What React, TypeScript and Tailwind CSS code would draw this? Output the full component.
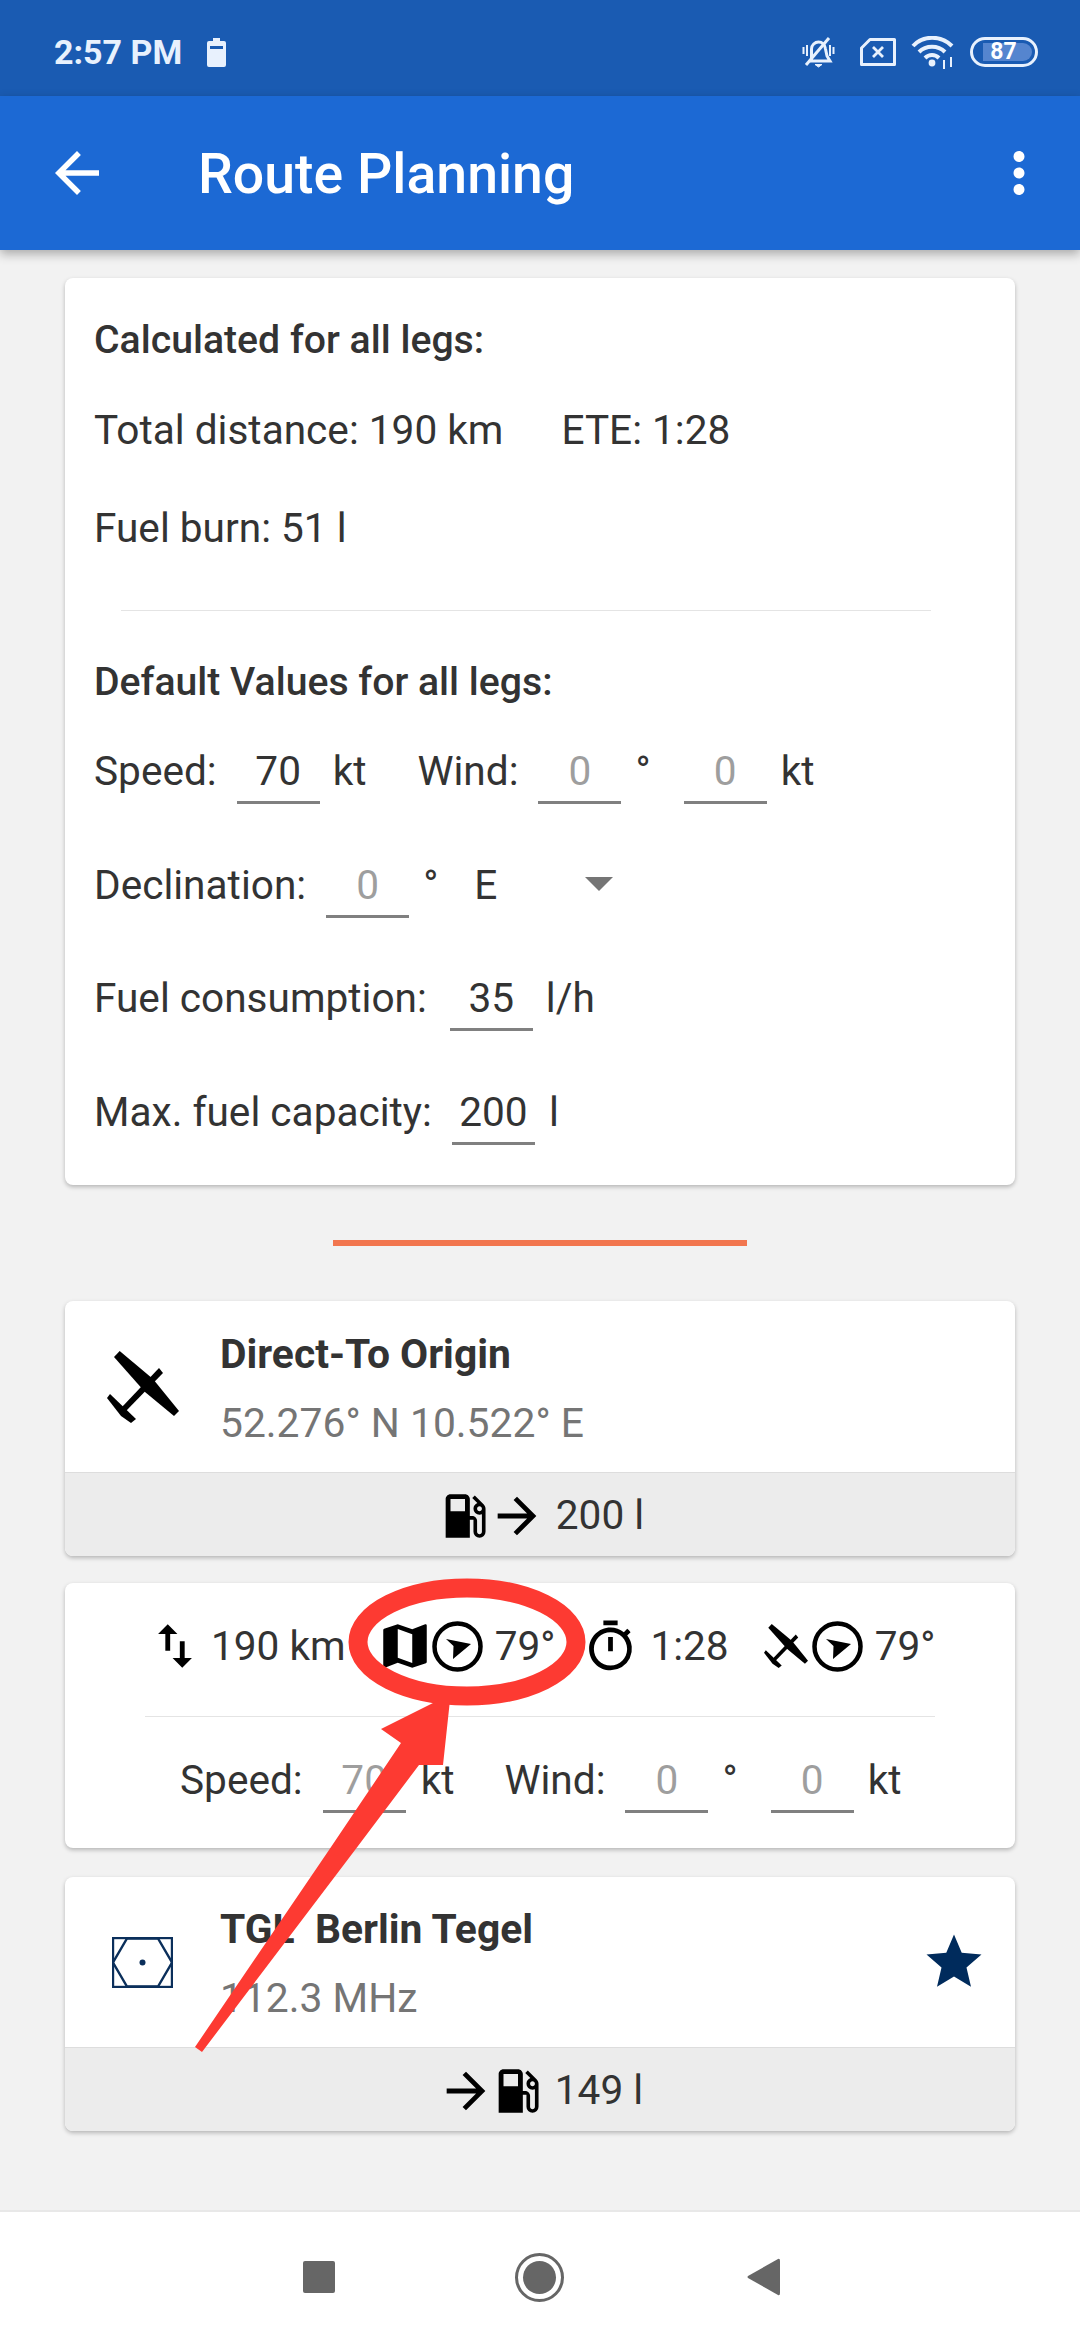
import { MdArrowBack, MdArrowForward, MdLocalGasStation, MdMap, MdMoreVert, MdOutlineTimer, MdStar, MdSwapVert } from 'react-icons/md'

function Field({ value, muted, className }: { value: string; muted?: boolean; className?: string }) {
  return (
    <div className={`w-[83px] h-[64px] border-b-[3px] border-[#808080] text-center leading-[63px] ${muted ? 'text-[#9e9e9e]' : ''} ${className ?? ''}`}>
      {value}
    </div>
  )
}

function Plane({ size }: { size: number }) {
  return (
    <svg width={size} height={size} viewBox="0 0 72 72" className="shrink-0">
      <path d="M12.7 0 L46 28 L72 60 L67 65 L38 41 L7 6 Z" fill="#000" />
      <path d="M52 17 L56 22 L19 60 L15 56 Z" fill="#000" />
      <path d="M3 43 L29 68 L24 72 L14 65 L0 47 Z" fill="#000" />
    </svg>
  )
}

function Compass() {
  return (
    <svg width="51" height="51" viewBox="0 0 51 51" className="shrink-0">
      <circle cx="25.5" cy="25.5" r="23" fill="none" stroke="#000" strokeWidth="4.5" />
      <path d="M39 23 L14 18 L21.5 25 L21 38 Z" fill="#000" />
    </svg>
  )
}

function Footer({ children }: { children: React.ReactNode }) {
  return (
    <div className="h-[84px] bg-[#ececec] border-t border-[#dddddd] rounded-b-[8px] flex items-center justify-center pt-[2px]">
      {children}
    </div>
  )
}

function StatusIcons() {
  return (
    <div className="flex items-center text-[#e8f1fd]">
      {/* muted bell */}
      <svg width="33" height="32" viewBox="0 0 33 32" fill="none" stroke="currentColor" strokeWidth="3">
        <path d="M9.5 24 V13 C9.5 9 13 6 16.5 6 C20 6 23 8.5 23.5 13 L25 20 L28 25 H8" />
        <path d="M4 29 L27 2" />
        <path d="M1.5 11 V18 M5 9 V20 M28 9 V20 M31.5 11 V18" strokeWidth="2" />
        <path d="M13 28.5 H20 L16.5 31 Z" fill="currentColor" strokeWidth="1" />
      </svg>
      <svg width="36" height="28" viewBox="0 0 36 28" fill="none" stroke="currentColor" strokeWidth="3" className="ml-[25px]">
        <path d="M10 1.5 H34.5 V26.5 H1.5 V10 Z" strokeLinejoin="round" />
        <path d="M13 9 L23 19 M23 9 L13 19" strokeWidth="2.8" />
      </svg>
      <svg width="44" height="33" viewBox="0 0 44 33" fill="none" stroke="currentColor" strokeWidth="4" className="ml-[15px]">
        <path d="M2 10 C12 -1 30 -1 41 10" />
        <path d="M8 16 C15 9 27 9 34 16" />
        <path d="M14 22 C18 18 24 18 28 22" />
        <circle cx="21" cy="27" r="3.4" fill="currentColor" stroke="none" />
        <path d="M33 24 V33 M40 21 V31" strokeWidth="2" />
      </svg>
      <div className="ml-[15px] w-[68px] h-[30px] rounded-full border-[3px] border-[#e8f1fd] flex items-center pl-[10px] pr-[3px]">
        <div className="w-full h-[18px] rounded-r-full bg-[#5585cf] text-[23px] leading-[18px] font-bold text-center pr-[8px] text-white">87</div>
      </div>
    </div>
  )
}

export default function App() {
  return (
    <div className="relative w-[1080px] h-[2340px] overflow-hidden flex flex-col bg-[#f2f2f2] text-[#333333] text-[40.6px] font-['Roboto',sans-serif]">
      {/* Status bar */}
      <div className="h-[96px] shrink-0 bg-[#1a5bb2] flex items-center pl-[54px] pr-[42px] pt-[8px] text-[#e8f1fd]">
        <span className="text-[34px] font-bold">2:57 PM</span>
        <svg width="19" height="29" viewBox="0 0 19 29" className="ml-[25px]">
          <path d="M6 0 H13 V3 H17 Q19 3 19 5 V27 Q19 29 17 29 H2 Q0 29 0 27 V5 Q0 3 2 3 H6 Z M3 8 V11 H16 V8 Z" fill="currentColor" fillRule="evenodd" />
        </svg>
        <div className="ml-auto">
          <StatusIcons />
        </div>
      </div>

      {/* Toolbar */}
      <div className="h-[154px] shrink-0 bg-[#1c69d4] flex items-center pl-[44px] pr-[28px] text-white shadow-[0_4px_10px_rgba(0,0,0,0.3)] z-10">
        <MdArrowBack size={66} />
        <span className="ml-[88px] text-[55.4px] font-medium pt-[4px]">Route Planning</span>
        <MdMoreVert size={66} className="ml-auto" />
      </div>

      <div className="flex-1 flex flex-col px-[65px] pt-[28px]">
        {/* Summary card */}
        <div className="bg-white rounded-[8px] shadow-[0_2px_4px_rgba(0,0,0,0.25)] pt-[32px] pb-[40px] px-[29px]">
          <div className="h-[60px] leading-[60px] font-medium text-[39.2px]">Calculated for all legs:</div>
          <div className="mt-[30px] h-[60px] leading-[60px] flex">
            <span>Total distance: 190 km</span>
            <span className="ml-[58px]">ETE: 1:28</span>
          </div>
          <div className="mt-[38px] h-[60px] leading-[60px]">Fuel burn: 51 l</div>
          <div className="mt-[52px] ml-[27px] mr-[55px] h-px bg-[#e4e4e4]" />
          <div className="mt-[41px] h-[60px] leading-[60px] font-medium text-[39.2px]">Default Values for all legs:</div>
          <div className="mt-[28px] h-[64px] flex leading-[63px]">
            <span>Speed:</span>
            <Field value="70" className="ml-[20px]" />
            <span className="ml-[13px]">kt</span>
            <span className="ml-[51px]">Wind:</span>
            <Field value="0" muted className="ml-[20px]" />
            <span className="ml-[14px]">°</span>
            <Field value="0" muted className="ml-[33px]" />
            <span className="ml-[14px]">kt</span>
          </div>
          <div className="mt-[50px] h-[64px] flex leading-[63px]">
            <span>Declination:</span>
            <Field value="0" muted className="ml-[20px]" />
            <span className="ml-[14px]">°</span>
            <span className="ml-[36px]">E</span>
            <div className="ml-[88px] mt-[23px] w-0 h-0 border-x-[14px] border-x-transparent border-t-[14px] border-t-[#757575]" />
          </div>
          <div className="mt-[49px] h-[64px] flex leading-[63px]">
            <span>Fuel consumption:</span>
            <Field value="35" className="ml-[23px]" />
            <span className="ml-[13px]">l/h</span>
          </div>
          <div className="mt-[50px] h-[64px] flex leading-[63px]">
            <span>Max. fuel capacity:</span>
            <Field value="200" className="ml-[20px]" />
            <span className="ml-[14px]">l</span>
          </div>
        </div>

        <div className="mt-[55px] h-[6px] w-[414px] self-center bg-[#f2764f]" />

        {/* Origin */}
        <div className="mt-[55px] bg-white rounded-[8px] shadow-[0_2px_4px_rgba(0,0,0,0.25)]">
          <div className="h-[171px] flex items-center pl-[42px]">
            <Plane size={72} />
            <div className="ml-[41px]">
              <div className="h-[60px] leading-[64px] font-bold text-[40.8px]">Direct-To Origin</div>
              <div className="mt-[10px] h-[60px] leading-[62px] text-[40.8px] text-[#757575]">52.276° N 10.522° E</div>
            </div>
          </div>
          <Footer>
            <MdLocalGasStation size={58} className="text-black" />
            <MdArrowForward size={58} className="text-black -ml-[6px]" />
            <span className="ml-[10px]">200 l</span>
          </Footer>
        </div>

        {/* Leg */}
        <div className="mt-[27px] bg-white rounded-[8px] shadow-[0_2px_4px_rgba(0,0,0,0.25)]">
          <div className="mt-[33px] h-[60px] leading-[60px] flex items-center pl-[81px]">
            <MdSwapVert size={58} className="text-black shrink-0" />
            <span className="ml-[7px]">190 km</span>
            <MdMap size={58} className="text-black shrink-0 ml-[30px]" />
            <div className="-ml-[2px]"><Compass /></div>
            <span className="ml-[12px]">79°</span>
            <MdOutlineTimer size={57} className="text-black shrink-0 ml-[27px]" />
            <span className="ml-[11px]">1:28</span>
            <div className="ml-[35px]"><Plane size={44} /></div>
            <div className="ml-[4px]"><Compass /></div>
            <span className="ml-[12px]">79°</span>
          </div>
          <div className="mt-[40px] mx-[80px] h-px bg-[#e4e4e4]" />
          <div className="mt-[32px] pb-[35px] pl-[115px] h-[99px] flex leading-[63px]">
            <span>Speed:</span>
            <Field value="70" muted className="ml-[20px]" />
            <span className="ml-[15px]">kt</span>
            <span className="ml-[50px]">Wind:</span>
            <Field value="0" muted className="ml-[20px]" />
            <span className="ml-[14px]">°</span>
            <Field value="0" muted className="ml-[33px]" />
            <span className="ml-[14px]">kt</span>
          </div>
        </div>

        {/* Destination */}
        <div className="mt-[29px] bg-white rounded-[8px] shadow-[0_2px_4px_rgba(0,0,0,0.25)]">
          <div className="h-[170px] flex items-center pl-[47px] pr-[28px]">
            <svg width="61" height="51" viewBox="0 0 61 51" fill="none" stroke="#0b2f5b" className="shrink-0">
              <rect x="1" y="1" width="59" height="49" strokeWidth="2.4" />
              <path d="M15 1.5 H46 L60 25.5 L46 49.5 H15 L1 25.5 Z" strokeWidth="2.4" />
              <circle cx="30.5" cy="25.5" r="3" fill="#0b2f5b" stroke="none" />
            </svg>
            <div className="ml-[47px]">
              <div className="h-[60px] leading-[64px] font-bold text-[40.8px] whitespace-pre">TGL  Berlin Tegel</div>
              <div className="mt-[10px] h-[60px] leading-[62px] text-[40.8px] text-[#757575]">112.3 MHz</div>
            </div>
            <MdStar size={66} className="ml-auto text-[#002b5c]" />
          </div>
          <Footer>
            <MdArrowForward size={58} className="text-black" />
            <MdLocalGasStation size={58} className="text-black -ml-[6px]" />
            <span className="ml-[8px]">149 l</span>
          </Footer>
        </div>
      </div>

      {/* Nav bar */}
      <div className="h-[130px] shrink-0 bg-white border-t-2 border-[#e8e8e8] flex items-center justify-center pt-[2px] pl-[2px]">
        <div className="w-[32px] h-[32px] rounded-[2px] bg-[#666666]" />
        <div className="ml-[180px] w-[49px] h-[49px] rounded-full border-[3px] border-[#666666] flex items-center justify-center">
          <div className="w-[33px] h-[33px] rounded-full bg-[#666666]" />
        </div>
        <svg width="33" height="38" viewBox="0 0 33 38" className="ml-[183px]">
          <path d="M31 1 Q33 0 33 3 V35 Q33 38 31 37 L1 20 Q0 19 1 18 Z" fill="#666666" />
        </svg>
      </div>

      {/* Red annotation drawn on top of the screenshot */}
      <svg viewBox="0 0 1080 2340" className="absolute inset-0 w-[1080px] h-[2340px] pointer-events-none z-20">
        <ellipse cx="467" cy="1642" rx="109" ry="54" fill="none" stroke="#fd3a32" strokeWidth="19" />
        <path d="M450 1700 L443 1765 L419 1765 L355 1850 L202 2052 L195 2047 L329 1850 L401 1743 L381 1729 L439 1700 Z" fill="#fd3a32" />
      </svg>
    </div>
  )
}
